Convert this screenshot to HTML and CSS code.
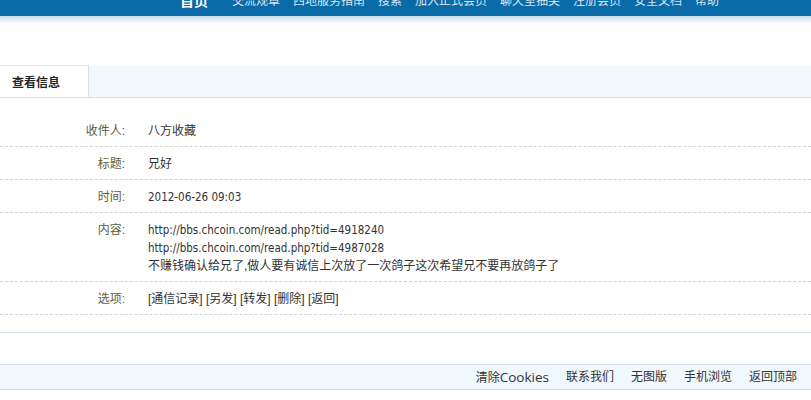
FILE: index.html
```html
<!DOCTYPE html>
<html lang="zh-CN">
<head>
<meta charset="utf-8">
<title>查看信息</title>
<link rel="stylesheet" href="styles.css">
</head>
<body>
<div class="topbar">
  <nav class="nav">
    <a class="home">首页</a>
    <a>交流规章</a>
    <a>西地服务指南</a>
    <a>搜索</a>
    <a>加入正式会员</a>
    <a>聊天室抽奖</a>
    <a>注册会员</a>
    <a>安全文档</a>
    <a>帮助</a>
  </nav>
</div>
<div class="shadow"></div>

<div class="tabs">
  <div class="tab">查看信息</div>
</div>

<div class="rows">
  <div class="row">
    <div class="label">收件人:</div>
    <div class="value">八方收藏</div>
  </div>
  <div class="row">
    <div class="label">标题:</div>
    <div class="value">兄好</div>
  </div>
  <div class="row">
    <div class="label">时间:</div>
    <div class="value en">2012-06-26 09:03</div>
  </div>
  <div class="row">
    <div class="label">内容:</div>
    <div class="value">
      <div class="en">http://bbs.chcoin.com/read.php?tid=4918240</div>
      <div class="en">http://bbs.chcoin.com/read.php?tid=4987028</div>
      <div>不赚钱确认给兄了,做人要有诚信上次放了一次鸽子这次希望兄不要再放鸽子了</div>
    </div>
  </div>
  <div class="row">
    <div class="label">选项:</div>
    <div class="value ops">[通信记录] [另发] [转发] [删除] [返回]</div>
  </div>
</div>

<div class="divider"></div>

<footer class="footer">
  <a>清除<span class="latin">Cookies</span></a>
  <a>联系我们</a>
  <a>无图版</a>
  <a>手机浏览</a>
  <a>返回顶部</a>
</footer>
</body>
</html>
```

FILE: styles.css
```css
html, body {
  margin: 0;
  padding: 0;
  background: #fff;
}
body {
  font-family: "Liberation Sans", "Noto Sans CJK SC", sans-serif;
  font-size: 12px;
  color: #333;
}
a {
  color: inherit;
  text-decoration: none;
}

.topbar {
  height: 16px;
  background: #0a69a7;
  overflow: hidden;
}
.nav {
  display: flex;
  align-items: center;
  gap: 13px;
  padding-left: 180px;
  margin-top: -8px;
  height: 16px;
  line-height: 16px;
  font-family: "Noto Sans CJK SC", sans-serif;
  color: #d6e6f3;
}
.nav .home {
  color: #fff;
  font-weight: bold;
  font-size: 14px;
  margin-right: 11px;
}
.shadow {
  height: 9px;
  background: linear-gradient(#c9dbe7, #eef4f8 60%, #fff);
}

.tabs {
  margin-top: 41px;
  height: 31px;
  background: #f0f7fd;
  border-bottom: 1px solid #d6e0e8;
  display: flex;
}
.tab {
  width: 76px;
  padding-left: 12px;
  height: 31px;
  margin-top: -1px;
  border-top: 1px solid #e2e8ec;
  border-right: 1px solid #d6e0e8;
  background: #fff;
  margin-bottom: -1px;
  line-height: 32px;
  font-weight: bold;
  font-family: "Noto Sans CJK SC", sans-serif;
  color: #222;
}

.rows {
  margin-top: 16px;
}
.row {
  display: flex;
  padding: 8px 0 6px;
  line-height: 18px;
  border-bottom: 1px dashed #d4d4d4;
}
.label {
  width: 125px;
  text-align: right;
  color: #60603a;
  flex: none;
}
.value {
  margin-left: 23px;
  color: #333;
}
.en {
  font-family: "DejaVu Sans", "Liberation Sans", sans-serif;
  font-stretch: condensed;
  font-size: 11.5px;
  line-height: 18px;
  height: 18px;
}

.divider {
  margin-top: 17px;
  border-top: 1px solid #d6e0e8;
}

.footer {
  margin-top: 31px;
  background: #f0f7fd;
  border-top: 1px solid #d6e0e8;
  border-bottom: 1px solid #d6e0e8;
  height: 24px;
  line-height: 24px;
  display: flex;
  justify-content: flex-end;
  gap: 17px;
  padding-right: 14px;
  font-family: "Open Sans", "Noto Sans CJK SC", sans-serif;
  color: #333;
}
.footer .latin {
  font-size: 13.5px;
}
```
